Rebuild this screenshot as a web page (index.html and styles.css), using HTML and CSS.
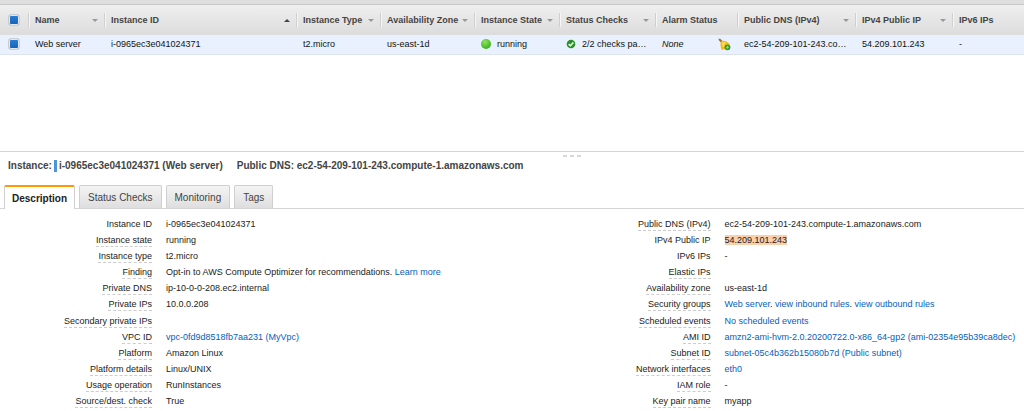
FILE: index.html
```html
<!DOCTYPE html>
<html lang="en">
<head>
  <meta charset="UTF-8" />
  <meta name="viewport" content="width=device-width, initial-scale=1.0" />
  <title>Instances</title>
  <link rel="stylesheet" href="styles.css">
</head>
<body>
  <div class="topbar"></div>

  <div class="list">
    <table class="instances">
      <colgroup>
        <col class="w-check"><col class="w-name"><col class="w-id"><col class="w-type"><col class="w-zone">
        <col class="w-state"><col class="w-checks"><col class="w-alarm"><col class="w-dns"><col class="w-ip"><col>
      </colgroup>
      <thead>
        <tr>
          <th><input type="checkbox" class="check" aria-label="Select all" checked></th>
          <th><div class="head">Name <i class="sort"></i></div></th>
          <th><div class="head">Instance ID <i class="sort up"></i></div></th>
          <th><div class="head">Instance Type <i class="sort"></i></div></th>
          <th><div class="head">Availability Zone <i class="sort"></i></div></th>
          <th><div class="head">Instance State <i class="sort"></i></div></th>
          <th><div class="head">Status Checks <i class="sort"></i></div></th>
          <th><div class="head">Alarm Status</div></th>
          <th><div class="head">Public DNS (IPv4) <i class="sort"></i></div></th>
          <th><div class="head">IPv4 Public IP <i class="sort"></i></div></th>
          <th><div class="head">IPv6 IPs</div></th>
        </tr>
      </thead>
      <tbody>
        <tr>
          <td><input type="checkbox" class="check" aria-label="Select Web server" checked></td>
          <td>Web server</td>
          <td>i-0965ec3e041024371</td>
          <td>t2.micro</td>
          <td>us-east-1d</td>
          <td><div class="cell"><span class="dot"></span>running</div></td>
          <td>
            <div class="cell">
              <svg viewBox="0 0 10 10" width="10" height="10">
                <circle cx="5" cy="5" r="4.3" fill="#25951f"/>
                <path d="M2.7 5.1 L4.4 6.7 L7.4 3.4" fill="none" stroke="#fff" stroke-width="1.5"/>
              </svg>
              2/2 checks pa…
            </div>
          </td>
          <td>
            <div class="cell between">
              <em>None</em>
              <svg viewBox="0 0 13 13" width="13" height="13">
                <path d="M0.4 0.8 L2.2 0.7 L5 3.4 L3.4 5 L1 2.6 Z" fill="#a8701c"/>
                <path d="M3.2 3.2 Q6 1.9 8.4 3.6 L11.8 6 Q11.9 8 9.3 10 Q6.8 12 3.4 11.8 Q2.2 8.6 2.6 5 Z" fill="#f5b918"/>
                <path d="M4 5 Q5.5 3.4 7.6 4.4 L5.2 9.4 Q3.9 7.5 4 5 Z" fill="#fddc58"/>
                <circle cx="9.5" cy="9.3" r="2.9" fill="#2f9e28"/>
                <path d="M9.5 7.8 V10.8 M8 9.3 H11" stroke="#a5e090" stroke-width="0.8"/>
              </svg>
            </div>
          </td>
          <td>ec2-54-209-101-243.co…</td>
          <td>54.209.101.243</td>
          <td>-</td>
        </tr>
      </tbody>
    </table>
  </div>

  <div class="panel">
    <div class="grip"><i></i><i></i><i></i></div>
    <div class="title">
      <div class="instance">Instance: <span class="bar"></span> i-0965ec3e041024371 (Web server)</div>
      <div>Public DNS: ec2-54-209-101-243.compute-1.amazonaws.com</div>
    </div>

    <div class="tabs">
      <button class="tab active">Description</button>
      <button class="tab">Status Checks</button>
      <button class="tab">Monitoring</button>
      <button class="tab">Tags</button>
    </div>

    <div class="details">
      <dl>
        <div class="row"><dt class="plain">Instance ID</dt><dd>i-0965ec3e041024371</dd></div>
        <div class="row"><dt>Instance state</dt><dd>running</dd></div>
        <div class="row"><dt>Instance type</dt><dd>t2.micro</dd></div>
        <div class="row"><dt>Finding</dt><dd>Opt-in to AWS Compute Optimizer for recommendations. <a href="#">Learn more</a></dd></div>
        <div class="row"><dt>Private DNS</dt><dd>ip-10-0-0-208.ec2.internal</dd></div>
        <div class="row"><dt>Private IPs</dt><dd>10.0.0.208</dd></div>
        <div class="row"><dt>Secondary private IPs</dt><dd></dd></div>
        <div class="row"><dt>VPC ID</dt><dd><a href="#">vpc-0fd9d8518fb7aa231 (MyVpc)</a></dd></div>
        <div class="row"><dt>Platform</dt><dd>Amazon Linux</dd></div>
        <div class="row"><dt>Platform details</dt><dd>Linux/UNIX</dd></div>
        <div class="row"><dt>Usage operation</dt><dd>RunInstances</dd></div>
        <div class="row"><dt>Source/dest. check</dt><dd>True</dd></div>
      </dl>
      <dl>
        <div class="row"><dt>Public DNS (IPv4)</dt><dd>ec2-54-209-101-243.compute-1.amazonaws.com</dd></div>
        <div class="row"><dt class="plain">IPv4 Public IP</dt><dd><mark>54.209.101.243</mark></dd></div>
        <div class="row"><dt class="plain">IPv6 IPs</dt><dd>-</dd></div>
        <div class="row"><dt>Elastic IPs</dt><dd></dd></div>
        <div class="row"><dt>Availability zone</dt><dd>us-east-1d</dd></div>
        <div class="row"><dt>Security groups</dt><dd><a href="#">Web server</a>. <a href="#">view inbound rules</a>. <a href="#">view outbound rules</a></dd></div>
        <div class="row"><dt>Scheduled events</dt><dd><a href="#">No scheduled events</a></dd></div>
        <div class="row"><dt>AMI ID</dt><dd><a href="#">amzn2-ami-hvm-2.0.20200722.0-x86_64-gp2 (ami-02354e95b39ca8dec)</a></dd></div>
        <div class="row"><dt>Subnet ID</dt><dd><a href="#">subnet-05c4b362b15080b7d (Public subnet)</a></dd></div>
        <div class="row"><dt>Network interfaces</dt><dd><a href="#">eth0</a></dd></div>
        <div class="row"><dt>IAM role</dt><dd>-</dd></div>
        <div class="row"><dt>Key pair name</dt><dd>myapp</dd></div>
      </dl>
    </div>
  </div>
</body>
</html>
```
FILE: styles.css
```css
* {
  box-sizing: border-box;
}
body {
  margin: 0;
  min-height: 100vh;
  display: flex;
  flex-direction: column;
  font-family: "Liberation Sans", Arial, sans-serif;
  font-size: 9px;
  line-height: 12px;
  color: #222;
  background: #fff;
}
a {
  color: #0560bb;
  text-decoration: none;
}

/* instance list */
.topbar {
  height: 5px;
  background: #dedede;
  border-bottom: 1px solid #c8c8c8;
}
.list {
  height: 146px;
}
.instances {
  width: 100%;
  table-layout: fixed;
  border-collapse: collapse;
  white-space: nowrap;
}
.w-check { width: 28px; }
.w-name { width: 76px; }
.w-id { width: 192px; }
.w-type { width: 84px; }
.w-zone { width: 94px; }
.w-state { width: 85px; }
.w-checks { width: 96px; }
.w-alarm { width: 82px; }
.w-dns { width: 118px; }
.w-ip { width: 97px; }
.instances thead tr {
  background: linear-gradient(#efefef, #dcdcdc);
}
.instances th,
.instances td {
  padding: 0 6px;
  text-align: left;
}
.instances th {
  height: 30px;
  color: #444;
}
.instances td {
  height: 19px;
  padding-left: 7px;
  color: #111;
  background: #e8f1fd;
  border-bottom: 1px solid #dde4ec;
}
.instances th:first-child,
.instances td:first-child {
  padding: 0 0 0 8px;
}
.head {
  display: flex;
  align-items: center;
  justify-content: space-between;
}
th + th .head {
  height: 14px;
  margin-left: -6px;
  padding-left: 6px;
  border-left: 1px solid #cfcfcf;
  box-shadow: inset 1px 0 #f6f6f6;
}
.sort {
  border: 3px solid transparent;
  border-top-color: #999;
  border-bottom: 0;
}
.sort.up {
  border-top: 0;
  border-bottom: 3px solid #444;
}
.check {
  appearance: none;
  display: block;
  width: 12px;
  height: 12px;
  margin: 0;
  border: 1px solid #ccc;
  border-radius: 3px;
  background: #f4f4f4;
}
.check:checked {
  background: linear-gradient(#2a80d8, #1560b4) padding-box;
  box-shadow: inset 0 0 0 1px #e4e8ee;
}
.cell {
  display: flex;
  align-items: center;
  gap: 6px;
}
.between {
  justify-content: space-between;
}
.dot {
  width: 10px;
  height: 10px;
  border-radius: 50%;
  background: radial-gradient(circle at 40% 30%, #8fe45c, #3fb522 70%, #2f9a1a);
}

/* details panel */
.panel {
  flex: 1;
  display: flex;
  flex-direction: column;
  border-top: 1px solid #d5d5d5;
}
.grip {
  display: flex;
  justify-content: center;
  gap: 3px;
  height: 8px;
  padding: 3px 0 0 120px;
}
.grip i {
  width: 4px;
  height: 2px;
  background: #d8d8d8;
}
.title {
  display: flex;
  gap: 14px;
  padding: 0 8px;
  font-size: 10px;
  font-weight: bold;
  color: #444;
}
.instance {
  display: flex;
  gap: 2px;
}
.bar {
  width: 3px;
  background: #4f93d8;
}
.tabs {
  display: flex;
  align-items: flex-end;
  gap: 4px;
  height: 37px;
  padding: 0 4px;
  border-bottom: 1px solid #d5d5d5;
}
.tab {
  height: 23px;
  padding: 0 8px;
  font: 10px "Liberation Sans", Arial, sans-serif;
  color: #444;
  background: linear-gradient(#f4f4f4, #dedede);
  border: 1px solid #cfcfcf;
  border-bottom: 0;
  border-radius: 2px 2px 0 0;
}
.tab.active {
  height: 24px;
  margin-bottom: -1px;
  padding: 0 7px;
  font-weight: bold;
  color: #222;
  background: #fff;
  border-top: 2px solid #f90;
}
.details {
  flex: 1;
  display: grid;
  grid-template-columns: 6fr 5fr;
  padding: 9px 0 0;
}
dl {
  display: grid;
  grid-auto-rows: 1fr;
  margin: 0;
  min-width: 0;
}
.row {
  display: grid;
  grid-template-columns: 152px 1fr;
  column-gap: 14px;
  align-items: start;
  white-space: nowrap;
}
dt {
  justify-self: end;
  border-bottom: 1px dashed #ccc;
}
dt.plain {
  border-bottom-color: transparent;
}
dd {
  margin: 0;
}
mark {
  color: inherit;
  background: #fbcfab;
}
```
